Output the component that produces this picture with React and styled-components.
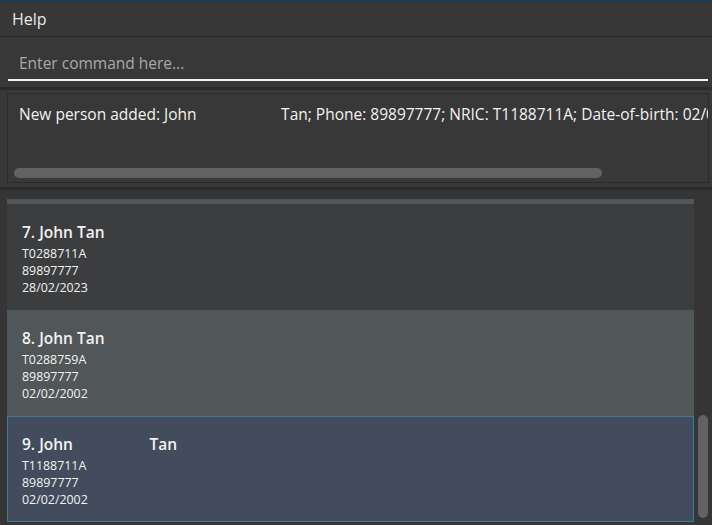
import React from "react";
import styled, { createGlobalStyle } from "styled-components";

const colors = {
  menu: "#373737",
  panel: "#383838",
  line: "#2b2b2b",
  listBg: "#353535",
  card: "#3c3d3f",
  cardAlt: "#515658",
  selected: "#424c5c",
  selectedBorder: "#3e7b91",
  thumb: "#626262",
  text: "#f2f2f2",
  placeholder: "#a9a9a9"
};

const GlobalStyle = createGlobalStyle`
  html, body {
    margin: 0;
    padding: 0;
    background: ${colors.listBg};
    font-family: "Open Sans", "Noto Sans", sans-serif;
    overflow: hidden;
  }
`;

const Window = styled.div`
  width: 712px;
  height: 525px;
  display: flex;
  flex-direction: column;
  border-top: 2px solid #1e3b56;
  box-sizing: border-box;
  overflow: hidden;
`;

const MenuBar = styled.div`
  height: 34px;
  flex-shrink: 0;
  background: ${colors.menu};
  border-bottom: 1px solid ${colors.line};
  display: flex;
  align-items: center;
  padding-left: 12px;
  font-size: 16px;
  color: #e8e8e8;
`;

const CommandSection = styled.div`
  height: 53px;
  flex-shrink: 0;
  background: ${colors.panel};
  border-bottom: 3px solid ${colors.line};
  padding: 0 4px 0 8px;
  display: flex;
  align-items: flex-start;
  box-sizing: border-box;
`;

const CommandInput = styled.input`
  margin-top: 9px;
  width: 100%;
  height: 35px;
  background: transparent;
  border: none;
  border-bottom: 2px solid #f2f2f2;
  outline: none;
  padding: 0 0 0 11px;
  font-family: "Open Sans", "Noto Sans", sans-serif;
  font-size: 15.5px;
  color: ${colors.text};
  box-sizing: border-box;

  &::placeholder {
    color: ${colors.placeholder};
  }
`;

const ResultSection = styled.div`
  flex-shrink: 0;
  background: ${colors.panel};
  padding: 3px 3px 4px 7px;
  border-bottom: 3px solid ${colors.line};
`;

const ResultBox = styled.div`
  height: 90px;
  border: 1px solid ${colors.line};
  box-sizing: border-box;
  display: flex;
  flex-direction: column;
  justify-content: space-between;
  padding: 9px 0 4px 11px;
  overflow: hidden;
`;

const ResultText = styled.div`
  font-size: 15.5px;
  color: ${colors.text};
  white-space: pre;
`;

const HScroll = styled.div`
  width: 588px;
  height: 10px;
  margin-left: -5px;
  border-radius: 5px;
  background: ${colors.thumb};
`;

const ListArea = styled.div`
  flex: 1;
  background: ${colors.listBg};
  display: flex;
  padding: 9px 4px 0 7px;
  gap: 4px;
  overflow: hidden;
`;

const List = styled.div`
  flex: 1;
  display: flex;
  flex-direction: column;
`;

const CardTail = styled.div`
  height: 5px;
  flex-shrink: 0;
  background: ${colors.cardAlt};
`;

const Card = styled.div`
  height: 106px;
  flex-shrink: 0;
  box-sizing: border-box;
  background: ${p =>
    p.$selected ? colors.selected : p.$alt ? colors.cardAlt : colors.card};
  border: ${p => (p.$selected ? `1px solid ${colors.selectedBorder}` : "none")};
  padding: ${p => (p.$selected ? "15px 14px" : "16px 15px")};
  display: flex;
  flex-direction: column;
  color: ${colors.text};
`;

const Name = styled.div`
  font-size: 15.5px;
  font-weight: 600;
  white-space: pre;
  line-height: 24px;
  margin-bottom: 1px;
`;

const Detail = styled.div`
  font-size: 12.4px;
  line-height: 17px;
`;

const VScrollTrack = styled.div`
  width: 10px;
  display: flex;
  flex-direction: column;
  justify-content: flex-end;
  padding-bottom: 7px;
`;

const VThumb = styled.div`
  height: 103px;
  border-radius: 5px;
  background: ${colors.thumb};
`;

const people = [
  { idx: 7, name: "John Tan", nric: "T0288711A", phone: "89897777", dob: "28/02/2023" },
  { idx: 8, name: "John Tan", nric: "T0288759A", phone: "89897777", dob: "02/02/2002" },
  { idx: 9, name: "John                   Tan", nric: "T1188711A", phone: "89897777", dob: "02/02/2002" }
];

function PersonCard({ person, i }) {
  const selected = i === people.length - 1;
  return (
    <Card $alt={i % 2 === 1} $selected={selected}>
      <Name>{`${person.idx}. ${person.name}`}</Name>
      <Detail>{person.nric}</Detail>
      <Detail>{person.phone}</Detail>
      <Detail>{person.dob}</Detail>
    </Card>
  );
}

function App() {
  return (
    <Window>
      <GlobalStyle />
      <MenuBar>Help</MenuBar>
      <CommandSection>
        <CommandInput placeholder="Enter command here..." />
      </CommandSection>
      <ResultSection>
        <ResultBox>
          <ResultText>
            {"New person added: John                     Tan; Phone: 89897777; NRIC: T1188711A; Date-of-birth: 02/02/2002"}
          </ResultText>
          <HScroll />
        </ResultBox>
      </ResultSection>
      <ListArea>
        <List>
          <CardTail />
          {people.map((p, i) => (
            <PersonCard person={p} i={i} key={p.idx} />
          ))}
        </List>
        <VScrollTrack>
          <VThumb />
        </VScrollTrack>
      </ListArea>
    </Window>
  );
}

export default App;
